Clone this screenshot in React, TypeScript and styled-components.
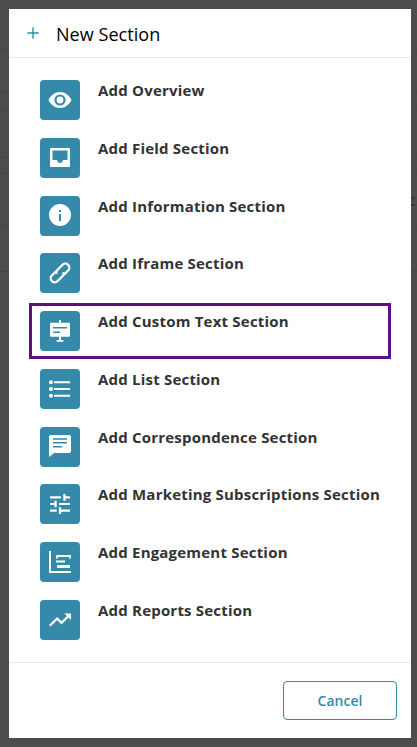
import React from "react";
import styled, { createGlobalStyle } from "styled-components";
import { Plus } from "lucide-react";

const backdropLines = [49, 92, 110, 157, 173, 225, 271];

const lineLayers = backdropLines
	.map((y) => `linear-gradient(#434343, #434343) 0 ${y}px / 417px 1px no-repeat`)
	.join(", ");

const GlobalStyle = createGlobalStyle`
	html, body {
		margin: 0;
		height: 100%;
		background: #4c4c4c;
	}
	* {
		box-sizing: border-box;
	}
`;

const sections = [
	{ label: "Add Overview", icon: "overview" },
	{ label: "Add Field Section", icon: "field" },
	{ label: "Add Information Section", icon: "info" },
	{ label: "Add Iframe Section", icon: "iframe" },
	{ label: "Add Custom Text Section", icon: "custom", active: true },
	{ label: "Add List Section", icon: "list" },
	{ label: "Add Correspondence Section", icon: "chat" },
	{ label: "Add Marketing Subscriptions Section", icon: "tune" },
	{ label: "Add Engagement Section", icon: "engagement" },
	{ label: "Add Reports Section", icon: "reports" },
];

const glyphs: Record<string, React.ReactNode> = {
	overview: (
		<path
			fillRule="evenodd"
			d="M12 4C7 4 2.700 7.300 0.500 12c2.200 4.700 6.500 8 11.500 8s9.300-3.300 11.500-8C21.300 7.300 17 4 12 4zM12 17.600a5.600 5.600 0 1 1 0-11.200 5.600 5.600 0 0 1 0 11.200zm0-9a3.400 3.400 0 1 0 0 6.800 3.400 3.400 0 0 0 0-6.800z"
		/>
	),
	field: (
		<path
			fillRule="evenodd"
			d="M3 2h18a1 1 0 0 1 1 1v17a1 1 0 0 1-1 1H3a1 1 0 0 1-1-1V3a1 1 0 0 1 1-1zm1.500 2.500V14H9c.3 1.800 1.300 3 3 3s2.700-1.200 3-3h4.500V4.500h-15z"
		/>
	),
	info: (
		<path
			fillRule="evenodd"
			d="M12 0a11 11 0 1 0 0 22 11 11 0 0 0 0-22zm1 17h-2v-7h2v7zm0-9h-2V6h2v2z"
		/>
	),
	iframe: (
		<g fill="none" stroke="#fff" strokeWidth="2.200" transform="rotate(-45 12 12)">
			<path d="M10.500 8H4.500a4 4 0 0 0 0 8h7a4 4 0 0 0 3.600-2.300" />
			<path d="M13.500 16h6a4 4 0 0 0 0-8h-7a4 4 0 0 0-3.600 2.300" />
		</g>
	),
	custom: (
		<path
			fillRule="evenodd"
			d="M11 1h2v2.700h8a1 1 0 0 1 1 1v12a1 1 0 0 1-1 1h-8V21h2.300v1.700H8.700V21H11v-3.300H3a1 1 0 0 1-1-1v-12a1 1 0 0 1 1-1h8V1zM5 8v1.500h14V8H5zm0 4.500V14h7v-1.500H5z"
		/>
	),
	list: (
		<path d="M3 3.300a2 2 0 1 1 0 4 2 2 0 0 1 0-4zM3 10a2 2 0 1 1 0 4 2 2 0 0 1 0-4zM3 16.700a2 2 0 1 1 0 4 2 2 0 0 1 0-4zM6 4.300h16v2H6zM6 11h16v2H6zM6 17.700h16v2H6z" />
	),
	chat: (
		<path
			fillRule="evenodd"
			d="M3 0h18a2 2 0 0 1 2 2v14a2 2 0 0 1-2 2H6l-5 4V2a2 2 0 0 1 2-2zM5 3.300v1.500h14V3.300H5zM5 7v1.500h14V7H5zm0 4v1.500h9V11H5z"
		/>
	),
	tune: (
		<path
			d="M3 17v2h6v-2H3zM3 5v2h10V5H3zm10 16v-2h8v-2h-8v-2h-2v6h2zM7 9v2H3v2h4v2h2V9H7zm14 4v-2H11v2h10zm-6-4h2V7h4V5h-4V3h-2v6z"
			transform="translate(12 12) scale(1.100) translate(-12 -12)"
		/>
	),
	engagement: (
		<path d="M1 1h2v20h20v2H1V1zM8 5h15v3.500h-2V7H10v1.500H8V5zM8 10.500h9v2H8zM9 15h13v3H9z" />
	),
	reports: (
		<path
			d="M16 6l2.300 2.300-4.900 4.900-4-4L2 16.600 3.400 18l6-6 4 4 6.300-6.300L22 12V6h-6z"
			transform="translate(12 12) scale(1.100) translate(-12 -12)"
		/>
	),
};

const App = () => (
	<>
		<GlobalStyle />
		<Backdrop>
			<Modal>
				<Header>
					<Plus size={18} strokeWidth={1.8} color="#358aaa" />
					<Title>New Section</Title>
				</Header>
				<SectionList>
					{sections.map((section) => (
						<SectionRow key={section.label} $active={section.active}>
							<IconTile>
								<svg width="24" height="24" viewBox="0 0 24 24" fill="#fff">
									{glyphs[section.icon]}
								</svg>
							</IconTile>
							<SectionLabel>{section.label}</SectionLabel>
						</SectionRow>
					))}
				</SectionList>
				<Footer>
					<CancelButton>Cancel</CancelButton>
				</Footer>
			</Modal>
		</Backdrop>
	</>
);

export default App;

const Backdrop = styled.div`
	width: 417px;
	height: 747px;
	padding: 9px 6px 9px 9px;
	background: linear-gradient(#1f3d4a, #1f3d4a) 411px 197px / 4px 2px no-repeat,
		linear-gradient(#1f3d4a, #1f3d4a) 411px 204px / 4px 2px no-repeat, ${lineLayers}, #4c4c4c;
`;

const Modal = styled.div`
	display: flex;
	flex-direction: column;
	width: 402px;
	height: 729px;
	background: #fff;
	font-family: "Open Sans", "Liberation Sans", sans-serif;
`;

const Header = styled.header`
	display: flex;
	align-items: center;
	gap: 14px;
	height: 49px;
	padding: 0 0 1px 15px;
	border-bottom: 1px solid #e6e6e6;
`;

const Title = styled.h2`
	margin: 2px 0 0;
	font-size: 18px;
	font-weight: 400;
	letter-spacing: 0.05px;
	color: #000;
`;

const SectionList = styled.div`
	display: flex;
	flex-direction: column;
	flex: 1;
	gap: 7.75px;
	padding: 17px 23px 0;
`;

const SectionRow = styled.div<{ $active?: boolean }>`
	display: flex;
	gap: 18px;
	height: 50px;
	padding: 5px 8px;
	outline: ${({ $active }) => ($active ? "3px solid #5f0f80" : "none")};
`;

const IconTile = styled.div`
	display: grid;
	place-items: center;
	flex: none;
	width: 40px;
	height: 40px;
	border-radius: 4px;
	background: #358aaa;
`;

const SectionLabel = styled.span`
	font-size: 15px;
	font-weight: 700;
	letter-spacing: 0.2px;
	line-height: 20px;
	color: #333;
	white-space: nowrap;
`;

const Footer = styled.footer`
	display: flex;
	justify-content: flex-end;
	align-items: flex-start;
	height: 76px;
	padding: 18px 14px 0 0;
	border-top: 1px solid #e6e6e6;
`;

const CancelButton = styled.button`
	width: 114px;
	height: 39px;
	padding: 0;
	border: 1px solid #358aaa;
	border-radius: 4px;
	background: #fff;
	font-family: inherit;
	font-size: 14px;
	font-weight: 600;
	color: #358aaa;
`;
